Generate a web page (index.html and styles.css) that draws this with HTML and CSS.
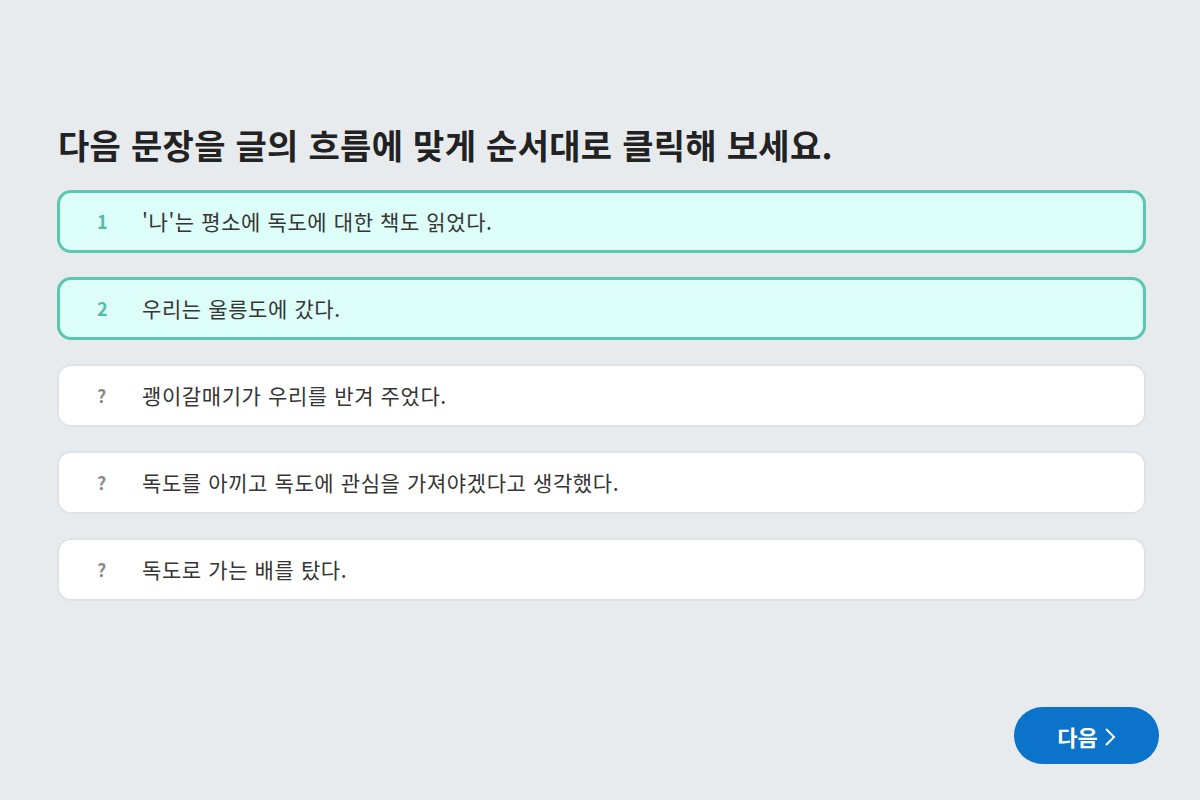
FILE: index.html
```html
<!DOCTYPE html>
<html lang="ko">
<head>
<meta charset="utf-8">
<link rel="stylesheet" href="styles.css">
</head>
<body>
<main class="page">
  <h1 class="title">다음 문장을 글의 흐름에 맞게 순서대로 클릭해 보세요.</h1>
  <ol class="list">
    <li class="item selected"><span class="num">1</span><span class="text">'나'는 평소에 독도에 대한 책도 읽었다.</span></li>
    <li class="item selected"><span class="num">2</span><span class="text">우리는 울릉도에 갔다.</span></li>
    <li class="item"><span class="num">?</span><span class="text">괭이갈매기가 우리를 반겨 주었다.</span></li>
    <li class="item"><span class="num">?</span><span class="text">독도를 아끼고 독도에 관심을 가져야겠다고 생각했다.</span></li>
    <li class="item"><span class="num">?</span><span class="text">독도로 가는 배를 탔다.</span></li>
  </ol>
  <div class="footer">
    <button class="next">다음<svg class="chev" width="12" height="22" viewBox="0 0 12 22"><path d="M2 3 L10 11 L2 19" fill="none" stroke="#fff" stroke-width="2"/></svg></button>
  </div>
</main>
</body>
</html>
```
FILE: styles.css
```css
html, body {
  margin: 0;
  padding: 0;
  background: #e7ebee;
  height: 100%;
}
body {
  font-family: "Noto Sans CJK KR", "Noto Sans", sans-serif;
  color: #222;
}
.page {
  box-sizing: border-box;
  height: 800px;
  padding: 122px 54px 0 57px;
  display: flex;
  flex-direction: column;
}
.title {
  margin: 0 0 0 1px;
  font-size: 34px;
  font-weight: 700;
  line-height: 46px;
  color: #222;
  letter-spacing: 0.3px;
}
.list {
  list-style: none;
  margin: 22px 0 0 0;
  padding: 0;
  display: flex;
  flex-direction: column;
  gap: 24px;
}
.item {
  box-sizing: border-box;
  height: 63px;
  display: flex;
  align-items: center;
  background: #fff;
  border: 2px solid #dfe3e6;
  border-radius: 14px;
  font-size: 21px;
  color: #353535;
}
.item.selected {
  background: #dcfdf8;
  border: 3px solid #5ac7b1;
}
.num {
  width: 45px;
  margin-left: 38px;
  margin-top: -2px;
  font-weight: 700;
  color: #8a8a8a;
  font-size: 18px;
}
.item.selected .num {
  color: #4fbfa7;
  margin-left: 37px;
}
.text {
  letter-spacing: 0.6px;
  margin-top: -2px;
}
.footer {
  margin-top: auto;
  margin-bottom: 36px;
  margin-right: -13px;
  display: flex;
  justify-content: flex-end;
}
.next {
  width: 145px;
  height: 57px;
  border: none;
  border-radius: 29px;
  background: #0b73c9;
  color: #fff;
  font-family: inherit;
  font-size: 22px;
  font-weight: 700;
  display: flex;
  align-items: center;
  justify-content: center;
  gap: 6px;
  padding: 0;
}
.chev {
  margin-top: 2px;
}
```
